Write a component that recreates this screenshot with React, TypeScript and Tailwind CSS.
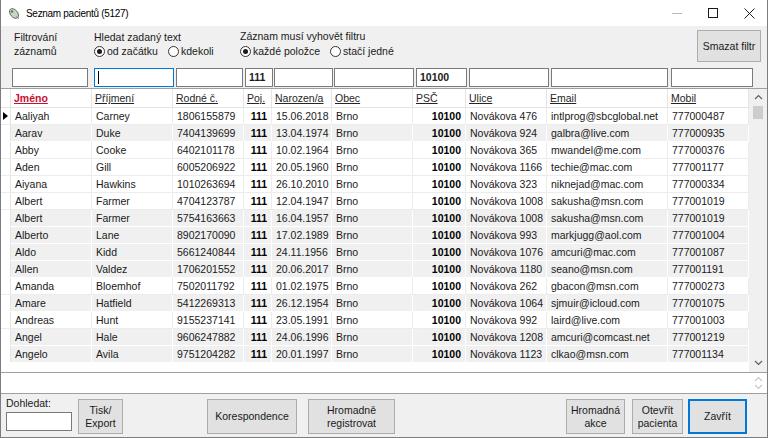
import React from "react";

type Row = [string, string, string, string, string, string, string, string, string, string];

const rows: Row[] = [
  ["Aaliyah", "Carney", "1806155879", "111", "15.06.2018", "Brno", "10100", "Novákova 476", "intlprog@sbcglobal.net", "777000487"],
  ["Aarav", "Duke", "7404139699", "111", "13.04.1974", "Brno", "10100", "Novákova 924", "galbra@live.com", "777000935"],
  ["Abby", "Cooke", "6402101178", "111", "10.02.1964", "Brno", "10100", "Novákova 365", "mwandel@me.com", "777000376"],
  ["Aden", "Gill", "6005206922", "111", "20.05.1960", "Brno", "10100", "Novákova 1166", "techie@mac.com", "777001177"],
  ["Aiyana", "Hawkins", "1010263694", "111", "26.10.2010", "Brno", "10100", "Novákova 323", "niknejad@mac.com", "777000334"],
  ["Albert", "Farmer", "4704123787", "111", "12.04.1947", "Brno", "10100", "Novákova 1008", "sakusha@msn.com", "777001019"],
  ["Albert", "Farmer", "5754163663", "111", "16.04.1957", "Brno", "10100", "Novákova 1008", "sakusha@msn.com", "777001019"],
  ["Alberto", "Lane", "8902170090", "111", "17.02.1989", "Brno", "10100", "Novákova 993", "markjugg@aol.com", "777001004"],
  ["Aldo", "Kidd", "5661240844", "111", "24.11.1956", "Brno", "10100", "Novákova 1076", "amcuri@mac.com", "777001087"],
  ["Allen", "Valdez", "1706201552", "111", "20.06.2017", "Brno", "10100", "Novákova 1180", "seano@msn.com", "777001191"],
  ["Amanda", "Bloemhof", "7502011792", "111", "01.02.1975", "Brno", "10100", "Novákova 262", "gbacon@msn.com", "777000273"],
  ["Amare", "Hatfield", "5412269313", "111", "26.12.1954", "Brno", "10100", "Novákova 1064", "sjmuir@icloud.com", "777001075"],
  ["Andreas", "Hunt", "9155237141", "111", "23.05.1991", "Brno", "10100", "Novákova 992", "laird@live.com", "777001003"],
  ["Angel", "Hale", "9606247882", "111", "24.06.1996", "Brno", "10100", "Novákova 1208", "amcuri@comcast.net", "777001219"],
  ["Angelo", "Avila", "9751204282", "111", "20.01.1997", "Brno", "10100", "Novákova 1123", "clkao@msn.com", "777001134"],
];

// shaded rows as they appear in the grid
const shaded = [false, true, false, false, false, false, true, true, true, true, false, true, false, true, true];

const cols = [
  { label: "Jméno", w: "w-[81px]" },
  { label: "Příjmení", w: "w-[81px]" },
  { label: "Rodné č.", w: "w-[71px]" },
  { label: "Poj.", w: "w-[28px]", right: true },
  { label: "Narozen/a", w: "w-[60px]" },
  { label: "Obec", w: "w-[81px]" },
  { label: "PSČ", w: "w-[53px]", right: true },
  { label: "Ulice", w: "w-[81px]" },
  { label: "Email", w: "w-[121px]" },
  { label: "Mobil", w: "w-[81px]" },
];

const filters = [
  { cls: "ml-[11px] w-[76px]", value: "" },
  { cls: "ml-[6px] w-[80px]", value: "", focus: true },
  { cls: "ml-[2px] w-[67px]", value: "" },
  { cls: "ml-[2px] w-[28px]", value: "111" },
  { cls: "ml-[1px] w-[59px]", value: "" },
  { cls: "ml-[1px] w-[80px]", value: "" },
  { cls: "ml-[2px] w-[51px]", value: "10100" },
  { cls: "ml-[2px] w-[80px]", value: "" },
  { cls: "ml-[2px] w-[117px]", value: "" },
  { cls: "ml-[3px] w-[82px]", value: "" },
];

function Radio({ checked, label, className = "" }: { checked?: boolean; label: string; className?: string }) {
  return (
    <div className={`flex items-center gap-[2px] ${className}`}>
      <span className="w-[11px] h-[11px] rounded-full border border-[#333] bg-white flex items-center justify-center">
        {checked && <span className="w-[5px] h-[5px] rounded-full bg-[#1a1a1a]" />}
      </span>
      <span>{label}</span>
    </div>
  );
}

function Btn({ className, children, primary }: { className: string; children: React.ReactNode; primary?: boolean }) {
  return (
    <div
      className={`${className} shrink-0 flex items-center justify-center text-center leading-[13px] bg-[#e1e1e1] ${
        primary ? "border-2 border-[#0078d7]" : "border border-[#adadad]"
      }`}
    >
      {children}
    </div>
  );
}

function Chevron({ up, color }: { up?: boolean; color: string }) {
  return (
    <svg width="9" height="6" viewBox="0 0 9 6" fill="none">
      <path d={up ? "M1 5 L4.5 1.5 L8 5" : "M1 1 L4.5 4.5 L8 1"} stroke={color} strokeWidth="1.2" />
    </svg>
  );
}

export default function App() {
  return (
    <div className="w-[768px] h-[438px] bg-[#f0f0f0] border-x border-b border-[#7d7d7d] flex flex-col text-[10.5px] text-[#1a1a1a] font-['Liberation_Sans',Arial,sans-serif] overflow-hidden">
      {/* title bar */}
      <div className="h-[26px] bg-white flex items-center shrink-0">
        <svg className="ml-[6px]" width="14" height="14" viewBox="0 0 14 14">
          <ellipse cx="7" cy="7.5" rx="3.6" ry="5.6" transform="rotate(-40 7 7.5)" fill="#c9d3c4" stroke="#5d6a5a" strokeWidth="0.9" />
          <circle cx="5" cy="5.5" r="1.3" fill="#3f8f3a" />
          <path d="M9.5 10.5 L12 12.5" stroke="#5d6a5a" strokeWidth="0.9" />
        </svg>
        <span className="ml-[5px] text-[10px] tracking-[-0.3px] text-black">Seznam pacientů (5127)</span>
        <div className="ml-auto flex h-full">
          <div className="w-[36px] flex items-center justify-center">
            <div className="w-[10px] h-px bg-[#b8b8b8]" />
          </div>
          <div className="w-[36px] flex items-center justify-center">
            <div className="w-[10px] h-[10px] border border-[#1a1a1a]" />
          </div>
          <div className="w-[36px] flex items-center justify-center">
            <svg width="11" height="11" viewBox="0 0 11 11">
              <path d="M0.5 0.5 L10.5 10.5 M10.5 0.5 L0.5 10.5" stroke="#1a1a1a" strokeWidth="1" />
            </svg>
          </div>
        </div>
      </div>

      {/* filter options */}
      <div className="h-[38px] flex shrink-0 leading-[14px]">
        <div className="ml-[13px] w-[80px] pt-[4px]">
          Filtrování
          <br />
          záznamů
        </div>
        <div className="w-[146px] pt-[4px]">
          <div>Hledat zadaný text</div>
          <div className="flex">
            <Radio checked label="od začátku" className="w-[74px]" />
            <Radio label="kdekoli" />
          </div>
        </div>
        <div className="pt-[3px]">
          <div>Záznam musí vyhovět filtru</div>
          <div className="flex mt-[1px]">
            <Radio checked label="každé položce" className="w-[90px]" />
            <Radio label="stačí jedné" />
          </div>
        </div>
        <Btn className="ml-auto mr-[6px] mt-[4px] w-[64px] h-[32px]">Smazat filtr</Btn>
      </div>

      {/* filter inputs */}
      <div className="h-[24px] flex items-start shrink-0">
        {filters.map((f, i) => (
          <div
            key={i}
            className={`${f.cls} mt-[4px] h-[19px] shrink-0 bg-white flex items-center px-[3px] font-bold ${
              f.focus ? "border border-[#0078d7]" : "border border-[#7a7a7a]"
            }`}
          >
            {f.focus ? <span className="w-px h-[13px] bg-black" /> : f.value}
          </div>
        ))}
      </div>

      {/* grid */}
      <div className="h-[285px] border-y border-[#a0a0a0] bg-white flex shrink-0">
        <div className="flex flex-col">
          <div className="flex h-[19px] border-b border-[#e4e4e4] leading-[18px]">
            <div className="w-[10px] border-r border-[#e4e4e4]" />
            {cols.map((c, i) => (
              <div
                key={c.label}
                className={`${c.w} shrink-0 border-r border-[#e4e4e4] px-[3px] underline ${
                  i === 0 ? "text-[#c4122f] font-bold" : "text-[#262626]"
                }`}
              >
                {c.label}
              </div>
            ))}
          </div>
          {rows.map((r, ri) => {
            const g = shaded[ri];
            return (
              <div
                key={ri}
                className={`flex h-[17px] leading-[16px] border-b ${g ? "bg-[#f0f0f0] border-white" : "bg-white border-[#ececec]"}`}
              >
                <div className="w-[10px] shrink-0 bg-white border-r border-[#e4e4e4] flex items-center justify-center">
                  {ri === 0 && (
                    <svg width="5" height="8" viewBox="0 0 5 8">
                      <path d="M0 0 L5 4 L0 8 Z" fill="#000" />
                    </svg>
                  )}
                </div>
                {cols.map((c, ci) => (
                  <div
                    key={ci}
                    className={`${c.w} shrink-0 border-r ${g ? "border-white" : "border-[#ececec]"} px-[4px] whitespace-nowrap overflow-hidden ${
                      c.right ? "text-right font-bold text-black" : ""
                    }`}
                  >
                    {r[ci]}
                  </div>
                ))}
              </div>
            );
          })}
        </div>
        <div className="flex-1 bg-[#f0f0f0] flex flex-col items-center pt-[5px] pb-[6px]">
          <Chevron up color="#606060" />
          <div className="mt-[6px] w-[10px] h-[13px] bg-[#cdcdcd]" />
          <div className="mt-auto">
            <Chevron color="#606060" />
          </div>
        </div>
      </div>

      {/* memo */}
      <div className="h-[21px] bg-white border-b border-[#a0a0a0] flex shrink-0">
        <div className="flex-1" />
        <div className="w-[17px] flex flex-col items-center justify-between py-[3px]">
          <Chevron up color="#c8c8c8" />
          <Chevron color="#c8c8c8" />
        </div>
      </div>

      {/* bottom buttons */}
      <div className="flex-1 flex items-start">
        <div className="ml-[5px] w-[66px] shrink-0">
          <div className="mt-[3px] leading-[13px]">Dohledat:</div>
          <div className="mt-[2px] h-[19px] border border-[#7a7a7a] bg-white" />
        </div>
        <Btn className="ml-[6px] mt-[5px] w-[45px] h-[35px]">
          Tisk/
          <br />
          Export
        </Btn>
        <Btn className="ml-[84px] mt-[5px] w-[90px] h-[35px]">Korespondence</Btn>
        <Btn className="ml-[11px] mt-[5px] w-[87px] h-[35px]">
          Hromadně
          <br />
          registrovat
        </Btn>
        <Btn className="ml-[171px] mt-[5px] w-[59px] h-[35px]">
          Hromadná
          <br />
          akce
        </Btn>
        <Btn className="ml-[7px] mt-[5px] w-[51px] h-[35px]">
          Otevřít
          <br />
          pacienta
        </Btn>
        <Btn primary className="ml-[5px] mt-[5px] w-[59px] h-[35px]">
          Zavřít
        </Btn>
      </div>
    </div>
  );
}
